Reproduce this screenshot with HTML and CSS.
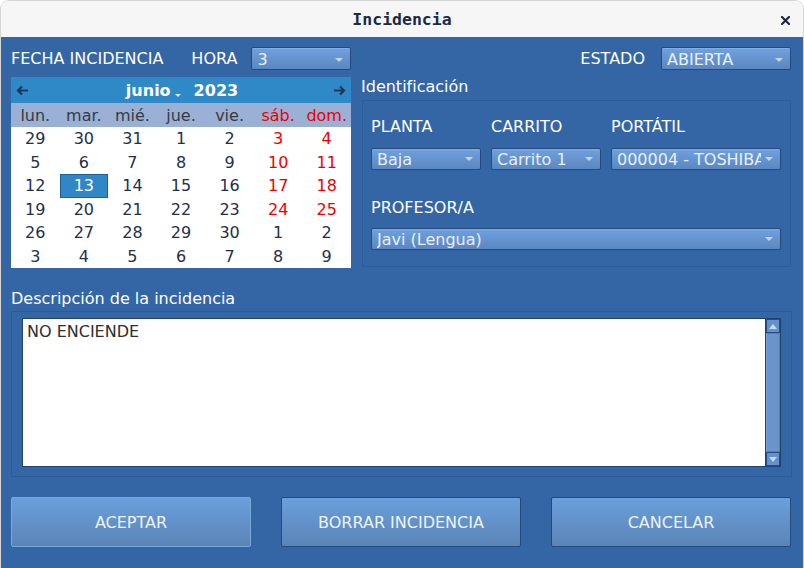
FILE: index.html
```html
<!DOCTYPE html>
<html lang="es">
<head>
<meta charset="utf-8">
<title>Incidencia</title>
<link rel="stylesheet" href="styles.css">
</head>
<body>
<div class="window">
  <header class="titlebar">
    <span></span>
    <h1 class="title">Incidencia</h1>
    <span class="close"><svg width="9" height="9" viewBox="0 0 9 9"><path d="M1 1L8 8M8 1L1 8" stroke="#1c2b45" stroke-width="2.2" stroke-linecap="square"/></svg></span>
  </header>
  <main class="content">
    <div class="toprow">
      <span class="lbl">FECHA INCIDENCIA</span>
      <span class="lbl hora">HORA</span>
      <div class="combo combo-hora"><span class="combo-text">3</span><span class="combo-arrow"></span></div>
      <span class="spacer"></span>
      <span class="lbl">ESTADO</span>
      <div class="combo combo-estado"><span class="combo-text">ABIERTA</span><span class="combo-arrow"></span></div>
    </div>

    <div class="mid">
      <div class="calendar">
        <div class="cal-head">
          <svg class="nav" width="13" height="11" viewBox="0 0 13 11"><path d="M12 5.5H2M6 1.5L2 5.5L6 9.5" fill="none" stroke="#1b3657" stroke-width="2.2"/></svg>
          <div class="cal-title"><span>junio</span><span class="mini-arrow"></span><span class="year">2023</span></div>
          <svg class="nav" width="13" height="11" viewBox="0 0 13 11"><path d="M1 5.5H11M7 1.5L11 5.5L7 9.5" fill="none" stroke="#1b3657" stroke-width="2.2"/></svg>
        </div>
        <div class="cal-week">
          <span>lun.</span><span>mar.</span><span>mié.</span><span>jue.</span><span>vie.</span><span class="red">sáb.</span><span class="red">dom.</span>
        </div>
        <div class="cal-days">
          <span>29</span><span>30</span><span>31</span><span>1</span><span>2</span><span class="red">3</span><span class="red">4</span>
          <span>5</span><span>6</span><span>7</span><span>8</span><span>9</span><span class="red">10</span><span class="red">11</span>
          <span>12</span><span class="sel">13</span><span>14</span><span>15</span><span>16</span><span class="red">17</span><span class="red">18</span>
          <span>19</span><span>20</span><span>21</span><span>22</span><span>23</span><span class="red">24</span><span class="red">25</span>
          <span>26</span><span>27</span><span>28</span><span>29</span><span>30</span><span>1</span><span>2</span>
          <span>3</span><span>4</span><span>5</span><span>6</span><span>7</span><span>8</span><span>9</span>
        </div>
      </div>

      <div class="ident">
        <div class="sect-label">Identificación</div>
        <div class="group ident-group">
          <span class="lbl">PLANTA</span>
          <span class="lbl">CARRITO</span>
          <span class="lbl">PORTÁTIL</span>
          <div class="combo row2"><span class="combo-text">Baja</span><span class="combo-arrow"></span></div>
          <div class="combo row2"><span class="combo-text">Carrito 1</span><span class="combo-arrow"></span></div>
          <div class="combo row2"><span class="combo-text clip">000004 - TOSHIBA</span><span class="combo-arrow"></span></div>
          <span class="lbl full prof">PROFESOR/A</span>
          <div class="combo full row4"><span class="combo-text">Javi (Lengua)</span><span class="combo-arrow"></span></div>
        </div>
      </div>
    </div>

    <div class="sect-label desc-label">Descripción de la incidencia</div>
    <div class="group desc-group">
      <div class="textarea">
        <div class="ta-text">NO ENCIENDE</div>
        <div class="scrollbar">
          <span class="sb-btn"><span class="tri up"></span></span>
          <span class="sb-track"></span>
          <span class="sb-btn"><span class="tri down"></span></span>
        </div>
      </div>
    </div>

    <div class="buttons">
      <button class="btn focus">ACEPTAR</button>
      <button class="btn">BORRAR INCIDENCIA</button>
      <button class="btn">CANCELAR</button>
    </div>
  </main>
</div>
</body>
</html>
```

FILE: styles.css
```css
* { box-sizing: border-box; }
html, body { margin: 0; padding: 0; }
body {
  background: #ffffff;
  font-family: "DejaVu Sans", sans-serif;
  font-size: 16px;
}
.window {
  width: 804px;
  height: 568px;
  border-radius: 9px 9px 0 0;
  overflow: hidden;
  display: flex;
  flex-direction: column;
  border: 1px solid #d6d6d9;
  border-bottom: none;
}
.titlebar {
  height: 36px;
  flex: none;
  background: #f6f6f7;
  display: grid;
  grid-template-columns: 1fr auto 1fr;
  align-items: center;
}
.title {
  margin: 0;
  font-family: "DejaVu Sans Mono", monospace;
  font-weight: bold;
  font-size: 16.5px;
  color: #1c2b45;
  padding-top: 1px;
}
.close {
  justify-self: end;
  padding-right: 13px;
  display: flex;
  padding-top: 2px;
}
.content {
  flex: 1;
  background: #3465a4;
  padding: 10px 12px 0 10px;
  color: #ffffff;
}
.lbl {
  color: #ffffff;
  line-height: 19px;
  white-space: nowrap;
}
.toprow {
  display: flex;
  align-items: center;
  height: 23px;
}
.hora { margin-left: 28px; margin-right: 14px; }
.spacer { flex: 1; }
.combo {
  height: 23px;
  display: flex;
  align-items: center;
  border: 1px solid #27497a;
  border-radius: 2px;
  background: linear-gradient(#70a1de, #5a87c1);
  padding-left: 5px;
  color: #eaf0f9;
  box-shadow: inset 0 1px 0 rgba(255,255,255,0.15);
}
.combo-text {
  flex: 1;
  overflow: hidden;
  white-space: nowrap;
  line-height: 19px;
}
.combo-text.clip { text-overflow: clip; }
.combo-arrow {
  flex: none;
  width: 0;
  height: 0;
  margin: 0 7px 0 4px;
  border-left: 4px solid transparent;
  border-right: 4px solid transparent;
  border-top: 4px solid #c9d6ea;
}
.combo-hora { width: 100px; padding-top: 2px; }
.combo-estado { width: 130px; margin-left: 16px; padding-top: 2px; }

.mid {
  display: flex;
  gap: 10px;
  margin-top: 7px;
}
.calendar {
  width: 340px;
  height: 191px;
  background: #ffffff;
  display: flex;
  flex-direction: column;
}
.cal-head {
  height: 26px;
  background: #2f89c6;
  display: flex;
  align-items: center;
  justify-content: space-between;
  padding: 0 5px 0 5px;
}
.nav { display: block; }
.cal-title {
  display: flex;
  align-items: center;
  font-weight: bold;
  color: #ffffff;
  line-height: 19px;
  margin-left: 2px;
}
.mini-arrow {
  width: 0;
  height: 0;
  margin: 10px 0 0 4px;
  border-left: 3px solid transparent;
  border-right: 3px solid transparent;
  border-top: 3px solid #d7e6f4;
}
.year { margin-left: 13px; }
.cal-week {
  height: 24px;
  background: #9ab0d4;
  display: grid;
  grid-template-columns: repeat(7, 1fr);
  align-items: center;
  text-align: center;
  color: #353b45;
  line-height: 19px;
}
.cal-days {
  flex: 1;
  display: grid;
  grid-template-columns: repeat(7, 1fr);
  grid-template-rows: repeat(6, 1fr);
  text-align: center;
  color: #23304a;
}
.cal-days span {
  display: flex;
  align-items: center;
  justify-content: center;
}
.red { color: #ee0000; }
.cal-days .sel {
  background: #2f87c5;
  border: 1px solid #1f5f96;
  color: #ffffff;
}

.ident {
  flex: 1;
  display: flex;
  flex-direction: column;
}
.sect-label {
  height: 23px;
  line-height: 19px;
  color: #ffffff;
}
.group {
  border: 1px solid #2c5b95;
}
.ident-group {
  height: 167px;
  padding: 16px 9px 0 8px;
  display: grid;
  grid-template-columns: 110px 110px 170px;
  column-gap: 10px;
  align-content: start;
  margin-left: 1px;
}
.ident-group .row2 { margin-top: 12px; height: 22px; }
.ident-group .prof { margin-top: 28px; }
.ident-group .row4 { margin-top: 11px; height: 22px; }
.full { grid-column: 1 / -1; }

.desc-label {
  margin-top: 21px;
  height: 19px;
}
.desc-group {
  margin-top: 3px;
  height: 166px;
  padding: 6px 10px 9px 10px;
  margin-right: -1px;
}
.textarea {
  height: 100%;
  display: flex;
  border: 1px solid #22426c;
  background: #ffffff;
}
.ta-text {
  flex: 1;
  color: #2e2e2e;
  padding: 3px 4px;
  line-height: 19px;
}
.scrollbar {
  width: 15px;
  display: flex;
  flex-direction: column;
  background: #3465a4;
  border-left: 1px solid #22426c;
}
.sb-btn {
  height: 14px;
  background: #6391cd;
  border: 1px solid #274c7e;
  display: flex;
  align-items: center;
  justify-content: center;
}
.sb-track {
  flex: 1;
  background: #6a94cb;
  border: 1px solid #5580b8;
  border-left-color: #7fa5d6;
}
.tri {
  width: 0;
  height: 0;
  border-left: 4px solid transparent;
  border-right: 4px solid transparent;
}
.tri.up { border-bottom: 5px solid #cbdaee; }
.tri.down { border-top: 5px solid #cbdaee; }

.buttons {
  display: flex;
  gap: 30px;
  margin-top: 20px;
}
.btn {
  width: 240px;
  height: 50px;
  font-family: "DejaVu Sans", sans-serif;
  font-size: 16px;
  color: #eef3fa;
  background: linear-gradient(#6a9fdd, #5b84b6);
  border: 1px solid #26497c;
  border-radius: 2px;
  padding: 0;
}
.btn.focus { border-color: #79a9d8; }
```
